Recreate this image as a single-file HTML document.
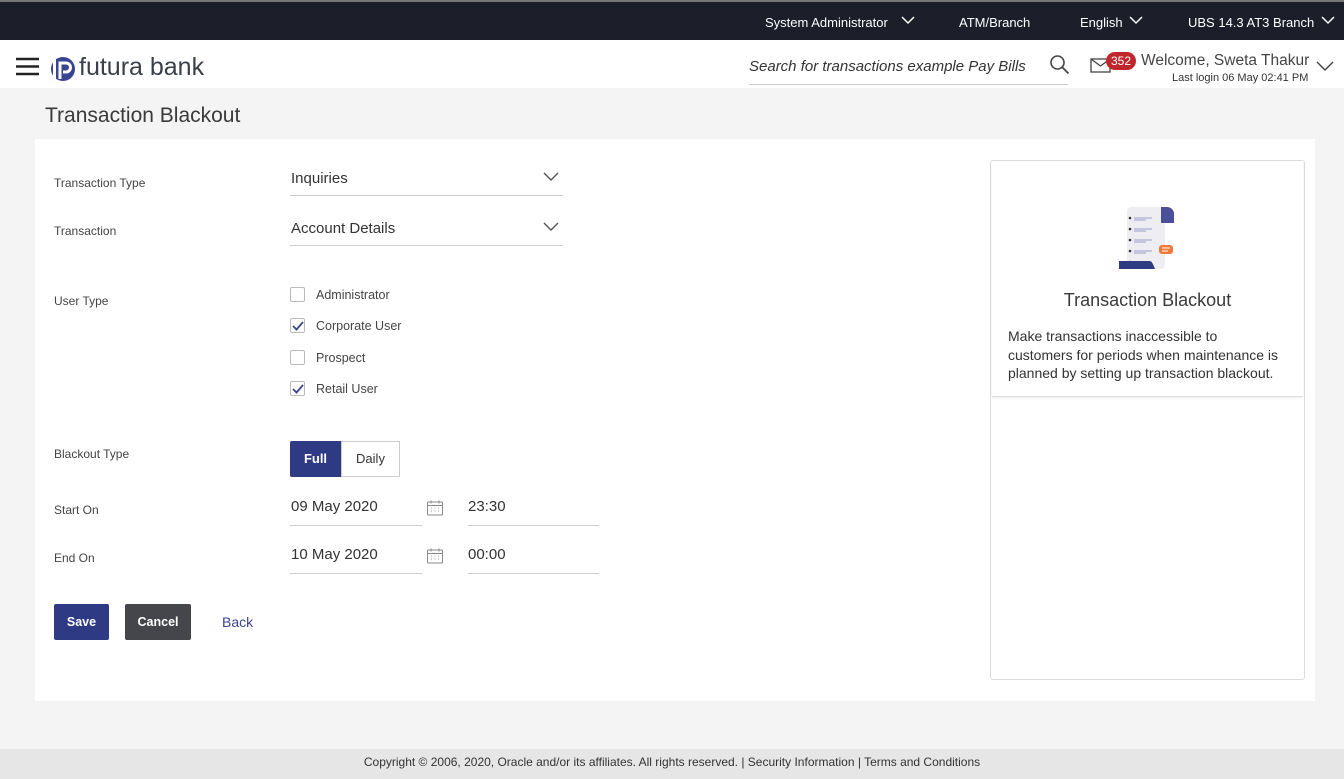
<!DOCTYPE html>
<html><head><meta charset="utf-8"><style>
*{box-sizing:border-box;margin:0;padding:0}
body{width:1344px;height:779px;background:#f4f4f4;font-family:"Liberation Sans",Arial,sans-serif;color:#333;position:relative;overflow:hidden}
.abs{position:absolute}
.top{left:0;top:0;width:1344px;height:40px;background:#1c1f2a;color:#fff;font-size:13px;border-top:2px solid #777}
.top span{position:absolute;top:13px}
.hdr{left:0;top:40px;width:1344px;height:48px;background:#fff}
.lbl{font-size:12px;color:#444;left:54px}
.val{font-size:15px;color:#333}
.line{height:1px;background:#ccc}
.cb{width:15px;height:15px;border:1px solid #bbb;border-radius:2px;background:#fff;left:290px}
.cbt{font-size:12.5px;color:#444;left:316px}
</style></head><body>
<div class="abs top">
<span style="left:765px">System Administrator</span>
<svg class="abs" style="left:900px;top:12px" width="16" height="12"><path d="M2 3l6 6 6-6" stroke="#fff" fill="none" stroke-width="1.5"/></svg>
<span style="left:959px">ATM/Branch</span>
<span style="left:1080px">English</span>
<svg class="abs" style="left:1128px;top:12px" width="16" height="12"><path d="M2 3l6 6 6-6" stroke="#fff" fill="none" stroke-width="1.5"/></svg>
<span style="left:1188px">UBS 14.3 AT3 Branch</span>
<svg class="abs" style="left:1320px;top:12px" width="16" height="12"><path d="M2 3l6 6 6-6" stroke="#fff" fill="none" stroke-width="1.5"/></svg>
</div>
<div class="abs hdr">
<svg class="abs" style="left:16px;top:17px" width="24" height="20"><path d="M0 2h23M0 9.5h23M0 17h23" stroke="#222" stroke-width="2.4"/></svg>
<svg class="abs" style="left:50px;top:16px" width="26" height="26"><circle cx="13" cy="13" r="12" fill="#3a4591"/><rect x="3" y="3" width="3" height="20" fill="#fff"/><path d="M10 23V7h6a4.5 4.5 0 010 9h-3" stroke="#fff" stroke-width="3" fill="none"/></svg>
<div class="abs" style="left:79px;top:13px;font-size:25px;color:#3a3f4a">futura bank</div>
<div class="abs" style="left:749px;top:18px;font-size:15px;font-style:italic;color:#333">Search for transactions example Pay Bills</div>
<div class="abs line" style="left:749px;top:44px;width:319px"></div>
<svg class="abs" style="left:1049px;top:14px" width="22" height="22"><circle cx="8.5" cy="8.5" r="6.5" stroke="#444" stroke-width="1.6" fill="none"/><path d="M13.5 13.5l6 6" stroke="#444" stroke-width="1.8"/></svg>
<svg class="abs" style="left:1090px;top:18px" width="22" height="16"><rect x="1" y="1" width="19" height="13" stroke="#444" fill="none" stroke-width="1.3"/><path d="M1 1l9.5 7 9.5-7" stroke="#444" fill="none" stroke-width="1.3"/></svg>
<div class="abs" style="left:1106px;top:12px;width:30px;height:18px;border-radius:9px;background:#c0262d;color:#fff;font-size:12px;text-align:center;line-height:18px">352</div>
<div class="abs" style="left:1141px;top:12px;font-size:15.5px;color:#444">Welcome, Sweta Thakur</div>
<div class="abs" style="left:1172px;top:32px;font-size:11px;color:#333">Last login 06 May 02:41 PM</div>
<svg class="abs" style="left:1316px;top:20px" width="18" height="12"><path d="M1 2l8 8 8-8" stroke="#444" fill="none" stroke-width="1.4"/></svg>
</div>
<div class="abs" style="left:45px;top:104px;font-size:21px;color:#3a3a3a">Transaction Blackout</div>
<div class="abs" style="left:35px;top:139px;width:1280px;height:562px;background:#fff"></div>

<div class="abs lbl" style="top:176px">Transaction Type</div>
<div class="abs val" style="left:291px;top:170px">Inquiries</div>
<svg class="abs" style="left:543px;top:171px" width="16" height="12"><path d="M1 2l7 7 7-7" stroke="#555" fill="none" stroke-width="1.4"/></svg>
<div class="abs line" style="left:290px;top:195px;width:273px"></div>
<div class="abs lbl" style="top:224px">Transaction</div>
<div class="abs val" style="left:291px;top:220px">Account Details</div>
<svg class="abs" style="left:543px;top:221px" width="16" height="12"><path d="M1 2l7 7 7-7" stroke="#555" fill="none" stroke-width="1.4"/></svg>
<div class="abs line" style="left:290px;top:245px;width:273px"></div>

<div class="abs lbl" style="top:294px">User Type</div>
<div class="abs cb" style="top:287px"></div><div class="abs cbt" style="top:288px">Administrator</div>
<div class="abs cb" style="top:318px"></div><svg class="abs" style="left:291px;top:319px" width="14" height="14"><path d="M2 7l3.5 3.5L12 3" stroke="#3a4591" stroke-width="1.8" fill="none"/></svg><div class="abs cbt" style="top:319px">Corporate User</div>
<div class="abs cb" style="top:350px"></div><div class="abs cbt" style="top:351px">Prospect</div>
<div class="abs cb" style="top:381px"></div><svg class="abs" style="left:291px;top:382px" width="14" height="14"><path d="M2 7l3.5 3.5L12 3" stroke="#3a4591" stroke-width="1.8" fill="none"/></svg><div class="abs cbt" style="top:382px">Retail User</div>

<div class="abs lbl" style="top:447px">Blackout Type</div>
<div class="abs" style="left:290px;top:441px;width:51px;height:36px;background:#2f3a85;color:#fff;font-size:13px;font-weight:bold;text-align:center;line-height:36px;border-radius:2px 0 0 2px">Full</div>
<div class="abs" style="left:341px;top:441px;width:59px;height:36px;border:1px solid #ccc;color:#333;font-size:13px;text-align:center;line-height:34px">Daily</div>

<div class="abs lbl" style="top:503px">Start On</div>
<div class="abs val" style="left:291px;top:498px">09 May 2020</div>
<div class="abs line" style="left:290px;top:525px;width:132px"></div>
<div class="abs val" style="left:468px;top:498px">23:30</div>
<div class="abs line" style="left:468px;top:525px;width:131px"></div>
<div class="abs lbl" style="top:551px">End On</div>
<div class="abs val" style="left:291px;top:546px">10 May 2020</div>
<div class="abs line" style="left:290px;top:573px;width:132px"></div>
<div class="abs val" style="left:468px;top:546px">00:00</div>
<div class="abs line" style="left:468px;top:573px;width:131px"></div>
<svg class="abs" style="left:426px;top:499px" width="18" height="18"><rect x="1.5" y="3" width="15" height="13" rx="1" stroke="#888" fill="none"/><path d="M1.5 6.5h15M5 1.5v3M13 1.5v3" stroke="#888"/><path d="M5 9h1M8.5 9h1M12 9h1M5 12h1M8.5 12h1M12 12h1" stroke="#999"/></svg>
<svg class="abs" style="left:426px;top:547px" width="18" height="18"><rect x="1.5" y="3" width="15" height="13" rx="1" stroke="#888" fill="none"/><path d="M1.5 6.5h15M5 1.5v3M13 1.5v3" stroke="#888"/><path d="M5 9h1M8.5 9h1M12 9h1M5 12h1M8.5 12h1M12 12h1" stroke="#999"/></svg>

<div class="abs" style="left:54px;top:604px;width:55px;height:36px;background:#2f3a85;color:#fff;font-size:12.5px;font-weight:bold;text-align:center;line-height:36px;border-radius:2px">Save</div>
<div class="abs" style="left:125px;top:604px;width:66px;height:36px;background:#44464c;color:#fff;font-size:12.5px;font-weight:bold;text-align:center;line-height:36px;border-radius:2px">Cancel</div>
<div class="abs" style="left:222px;top:614px;font-size:14px;color:#3a4591">Back</div>

<div class="abs" style="left:990px;top:160px;width:315px;height:520px;border:1px solid #ddd;border-radius:3px"></div>
<div class="abs" style="left:992px;top:162px;width:311px;height:235px;border-bottom:1px solid #ddd;box-shadow:0 1px 3px rgba(0,0,0,.08)"></div>
<svg class="abs" style="left:1115px;top:203px" width="62" height="70">
<rect x="12" y="4" width="38" height="62" rx="4" fill="#eeeef2"/>
<path d="M46 4h6a7 7 0 017 7v9H46z" fill="#4a4f99"/>
<circle cx="15" cy="15" r="1.3" fill="#333"/><path d="M19 15h18M19 17h12" stroke="#9a9fcc" stroke-width="1"/>
<circle cx="15" cy="26" r="1.3" fill="#333"/><path d="M19 26h18M19 28h12" stroke="#9a9fcc" stroke-width="1"/>
<circle cx="15" cy="37" r="1.3" fill="#333"/><path d="M19 37h18M19 39h12" stroke="#9a9fcc" stroke-width="1"/>
<circle cx="15" cy="48" r="1.3" fill="#333"/><path d="M19 48h18M19 50h12" stroke="#9a9fcc" stroke-width="1"/>
<circle cx="15" cy="59" r="1.3" fill="#333"/><path d="M19 59h18" stroke="#9a9fcc" stroke-width="1"/>
<rect x="44" y="42" width="14" height="9" rx="3" fill="#f07a3c"/><path d="M47 45h8M47 48h6" stroke="#fff" stroke-width="1"/>
<path d="M4 58h30c3 0 4 3 6 8H4z" fill="#2f3a85"/>
</svg>
<div class="abs" style="left:992px;top:290px;width:311px;text-align:center;font-size:18px;color:#3a3a3a">Transaction Blackout</div>
<div class="abs" style="left:1008px;top:327px;width:276px;font-size:14px;line-height:18.5px;color:#333">Make transactions inaccessible to customers for periods when maintenance is planned by setting up transaction blackout.</div>

<div class="abs" style="left:0;top:749px;width:1344px;height:30px;background:#e6e6e6;text-align:center;font-size:12px;line-height:27px;color:#333">Copyright © 2006, 2020, Oracle and/or its affiliates. All rights reserved. | Security Information | Terms and Conditions</div>
</body></html>
